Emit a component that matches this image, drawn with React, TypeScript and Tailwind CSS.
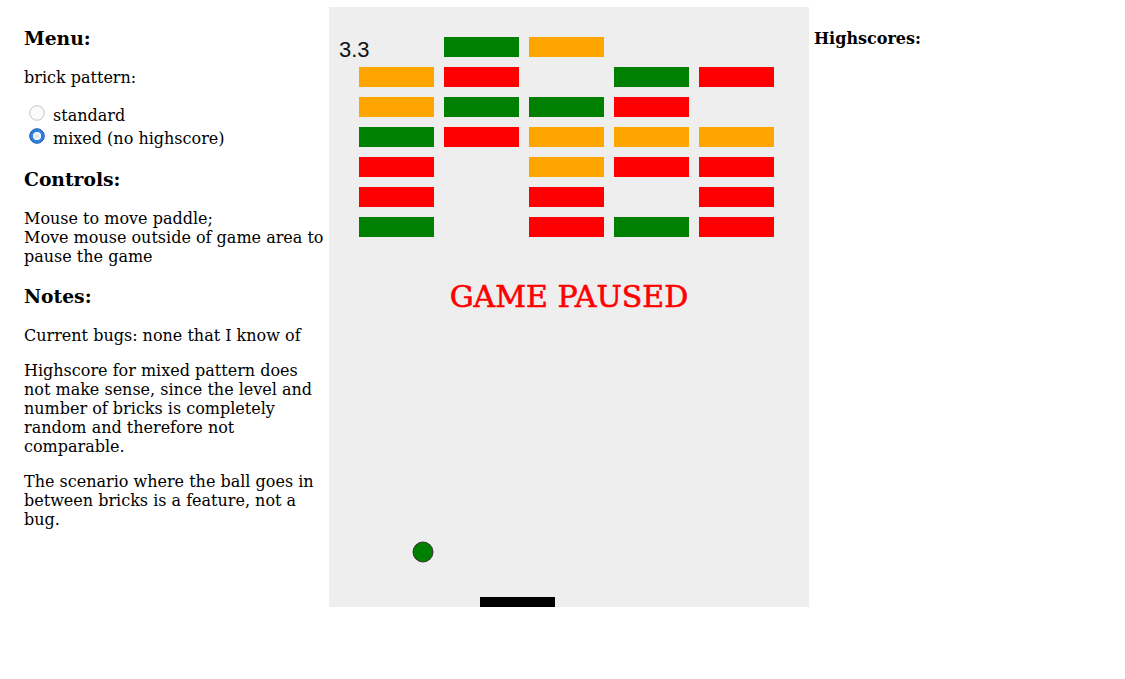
import React from "react";

const G = "#008000";
const O = "#ffa500";
const R = "#ff0000";
const bricks: (string | null)[][] = [
  [null, G, O, null, null],
  [O, R, null, G, R],
  [O, G, G, R, null],
  [G, R, O, O, O],
  [R, null, O, R, R],
  [R, null, R, null, R],
  [G, null, R, G, R],
];

function Radio({ checked }: { checked: boolean }) {
  return (
    <svg width="16" height="16" viewBox="0 0 16 16" className="ml-[5px] mr-[8px] shrink-0 -mt-[3px]">
      {checked ? (
        <>
          <circle cx="8" cy="8" r="7.3" fill="#2f7fe3" stroke="#1d5cb0" strokeWidth="1" />
          <circle cx="8" cy="8" r="3.3" fill="#d9e6f7" stroke="#ffffff" strokeWidth="1.6" />
        </>
      ) : (
        <circle cx="8" cy="8" r="7.3" fill="#fbfbfb" stroke="#c4c4c4" strokeWidth="1" />
      )}
    </svg>
  );
}

function Game() {
  return (
    <svg width="480" height="600" viewBox="0 0 480 600" className="block">
      <rect x="0" y="0" width="480" height="600" fill="#eeeeee" />
      {bricks.map((row, r) =>
        row.map((c, i) =>
          c ? <rect key={`${r}-${i}`} x={30 + 85 * i} y={30 + 30 * r} width="75" height="20" fill={c} /> : null
        )
      )}
      <text x="10" y="50" fontFamily="'Liberation Sans', Arial, sans-serif" fontSize="22" fill="#111">
        3.3
      </text>
      <text
        x="240"
        y="300"
        textAnchor="middle"
        fontFamily="'DejaVu Serif', serif"
        fontSize="30"
        fill="#ff0000"
        stroke="#ff0000"
        strokeWidth="0.6"
      >
        GAME PAUSED
      </text>
      <circle cx="94" cy="545" r="10" fill="#008000" stroke="#333333" strokeWidth="1" />
      <rect x="151" y="590" width="75" height="10" fill="#000000" />
    </svg>
  );
}

export default function App() {
  return (
    <div className="flex items-start pl-[8px] font-['DejaVu_Serif',serif] text-[16px] leading-[normal] text-black bg-white min-h-[679px]">
      <div className="w-[316px] pl-[16px] pt-[8px] shrink-0">
        <h3 className="text-[18.72px] font-bold my-[18.72px]">Menu:</h3>
        <p className="mt-4 mb-[15px] pt-[1px]">brick pattern:</p>
        <div className="mt-[15px] mb-4">
          <div className="flex items-center h-[23px] pt-[2px]">
            <Radio checked={false} />
            <span className="pt-[2px]">standard</span>
          </div>
          <div className="flex items-center h-[23px] pt-[2px]">
            <Radio checked={true} />
            <span className="pt-[2px]">mixed (no highscore)</span>
          </div>
        </div>
        <h3 className="text-[18.72px] font-bold mt-[19.6px] mb-[18.72px]">Controls:</h3>
        <p className="my-4">
          Mouse to move paddle;
          <br />
          Move mouse outside of game area to pause the game
        </p>
        <h3 className="text-[18.72px] font-bold mt-[19.5px] mb-[18.72px]">Notes:</h3>
        <p className="my-4">Current bugs: none that I know of</p>
        <p className="my-4">
          Highscore for mixed pattern does not make sense, since the level and number of bricks is completely random
          and therefore not comparable.
        </p>
        <p className="my-4">The scenario where the ball goes in between bricks is a feature, not a bug.</p>
      </div>
      <div className="ml-[5px] mt-[7px] shrink-0">
        <Game />
      </div>
      <div className="ml-[5px] pt-[8px]">
        <h4 className="text-[16px] font-bold my-[21.28px]">Highscores:</h4>
      </div>
    </div>
  );
}
